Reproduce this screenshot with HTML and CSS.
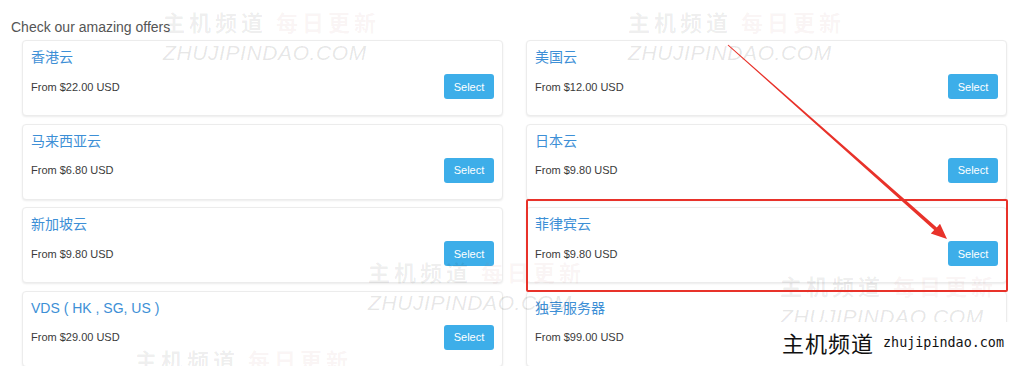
FILE: index.html
```html
<!DOCTYPE html>
<html lang="en">
<head>
    <meta charset="UTF-8">
    <title>Offers</title>
    <link rel="stylesheet" href="styles.css">
</head>
<body>

<div class="page">
    <h2 class="heading">Check our amazing offers</h2>

    <div class="offers">
        <div class="card">
            <div class="card-title">香港云</div>
            <div class="card-row">
                <span class="price">From $22.00 USD</span>
                <button class="select">Select</button>
            </div>
        </div>
        <div class="card">
            <div class="card-title">美国云</div>
            <div class="card-row">
                <span class="price">From $12.00 USD</span>
                <button class="select">Select</button>
            </div>
        </div>
        <div class="card">
            <div class="card-title">马来西亚云</div>
            <div class="card-row">
                <span class="price">From $6.80 USD</span>
                <button class="select">Select</button>
            </div>
        </div>
        <div class="card">
            <div class="card-title">日本云</div>
            <div class="card-row">
                <span class="price">From $9.80 USD</span>
                <button class="select">Select</button>
            </div>
        </div>
        <div class="card">
            <div class="card-title">新加坡云</div>
            <div class="card-row">
                <span class="price">From $9.80 USD</span>
                <button class="select">Select</button>
            </div>
        </div>
        <div class="card">
            <div class="card-title">菲律宾云</div>
            <div class="card-row">
                <span class="price">From $9.80 USD</span>
                <button class="select">Select</button>
            </div>
        </div>
        <div class="card">
            <div class="card-title">VDS ( HK , SG, US )</div>
            <div class="card-row">
                <span class="price">From $29.00 USD</span>
                <button class="select">Select</button>
            </div>
        </div>
        <div class="card">
            <div class="card-title">独享服务器</div>
            <div class="card-row">
                <span class="price">From $99.00 USD</span>
                <button class="select">Select</button>
            </div>
        </div>
    </div>

    <!-- watermarks -->
    <div class="wm wm-1"><div class="wm-cn">主机频道 <span>每日更新</span></div><div class="wm-en">ZHUJIPINDAO.COM</div></div>
    <div class="wm wm-2"><div class="wm-cn">主机频道 <span>每日更新</span></div><div class="wm-en">ZHUJIPINDAO.COM</div></div>
    <div class="wm wm-3"><div class="wm-cn">主机频道 <span>每日更新</span></div><div class="wm-en">ZHUJIPINDAO.COM</div></div>
    <div class="wm wm-4"><div class="wm-cn">主机频道 <span>每日更新</span></div><div class="wm-en">ZHUJIPINDAO.COM</div></div>
    <div class="wm wm-5"><div class="wm-cn">主机频道 <span>每日更新</span></div></div>

    <div class="highlight"></div>

    <svg class="arrow" width="1024" height="366" viewBox="0 0 1024 366">
        <polygon points="727.6,45.3 728.4,44.7 936.8,227.4 940,223.8 947,239 930.8,233.4 934.2,230" fill="#e8322a"/>
    </svg>

    <div class="logo">
        <span class="logo-cn">主机频道</span>
        <span class="logo-en">zhujipindao.com</span>
    </div>
</div>

</body>
</html>
```

FILE: styles.css
```css
body {
    margin: 0;
    background-color: #ffffff;
    font-family: 'Liberation Sans', Arial, 'Noto Sans CJK SC', sans-serif;
}

.page {
    position: relative;
    width: 1024px;
    height: 366px;
    overflow: hidden;
}

.heading {
    margin: 0;
    padding: 17px 0 3px 11px;
    font-size: 14px;
    line-height: 20px;
    font-weight: normal;
    color: #555555;
}

.offers {
    display: grid;
    grid-template-columns: 481px 481px;
    column-gap: 23px;
    row-gap: 7.5px;
    padding-left: 22px;
}

.card {
    box-sizing: border-box;
    height: 76px;
    padding: 7px 8px 0 8px;
    border: 1px solid #ececec;
    border-radius: 4px;
    box-shadow: 0 1px 2px rgba(0, 0, 0, 0.08);
    background: #ffffff;
}

.card-title {
    font-size: 14px;
    line-height: 18px;
    color: #3d8fd6;
    font-family: 'Liberation Sans', Arial, 'Noto Sans CJK SC', sans-serif;
}

.card-row {
    display: flex;
    justify-content: space-between;
    align-items: center;
    margin-top: 8px;
}

.price {
    font-size: 11px;
    color: #3a3a3a;
}

.select {
    width: 50px;
    height: 25px;
    padding: 0;
    border: none;
    border-radius: 3px;
    background-color: #3daee9;
    color: #ffffff;
    font-family: 'Liberation Sans', Arial, sans-serif;
    font-size: 11px;
}

/* overlays */
.wm {
    position: absolute;
    pointer-events: none;
}

.wm-cn {
    font-family: 'Noto Sans CJK SC', sans-serif;
    font-weight: bold;
    font-size: 22px;
    line-height: 28px;
    letter-spacing: 4px;
    color: rgba(0, 0, 0, 0.07);
    white-space: nowrap;
}

.wm-cn span {
    color: rgba(190, 100, 100, 0.07);
}

.wm-en {
    margin-top: 7px;
    font-family: 'Liberation Sans', Arial, sans-serif;
    font-style: italic;
    font-size: 21px;
    line-height: 22px;
    letter-spacing: 0.6px;
    color: rgba(0, 0, 0, 0.1);
    white-space: nowrap;
}

.wm-1 { left: 163px; top: 7px; }
.wm-2 { left: 628px; top: 7px; }
.wm-3 { left: 368px; top: 257px; }
.wm-4 { left: 780px; top: 271px; }
.wm-5 { left: 135px; top: 345px; }

.highlight {
    position: absolute;
    left: 526px;
    top: 199px;
    width: 478px;
    height: 89px;
    border: 2px solid #e8322a;
    border-radius: 2px;
}

.arrow {
    position: absolute;
    left: 0;
    top: 0;
}

.logo {
    position: absolute;
    left: 778px;
    top: 322px;
    width: 246px;
    height: 44px;
    display: flex;
    align-items: center;
    gap: 9px;
    padding: 0 0 4px 4px;
    background: #ffffff;
    box-sizing: border-box;
}

.logo-cn {
    font-family: 'Noto Sans CJK SC', sans-serif;
    font-size: 22px;
    letter-spacing: 1px;
    color: #111111;
}

.logo-en {
    font-family: 'DejaVu Sans Mono', monospace;
    font-size: 13.4px;
    color: #111111;
}
```
